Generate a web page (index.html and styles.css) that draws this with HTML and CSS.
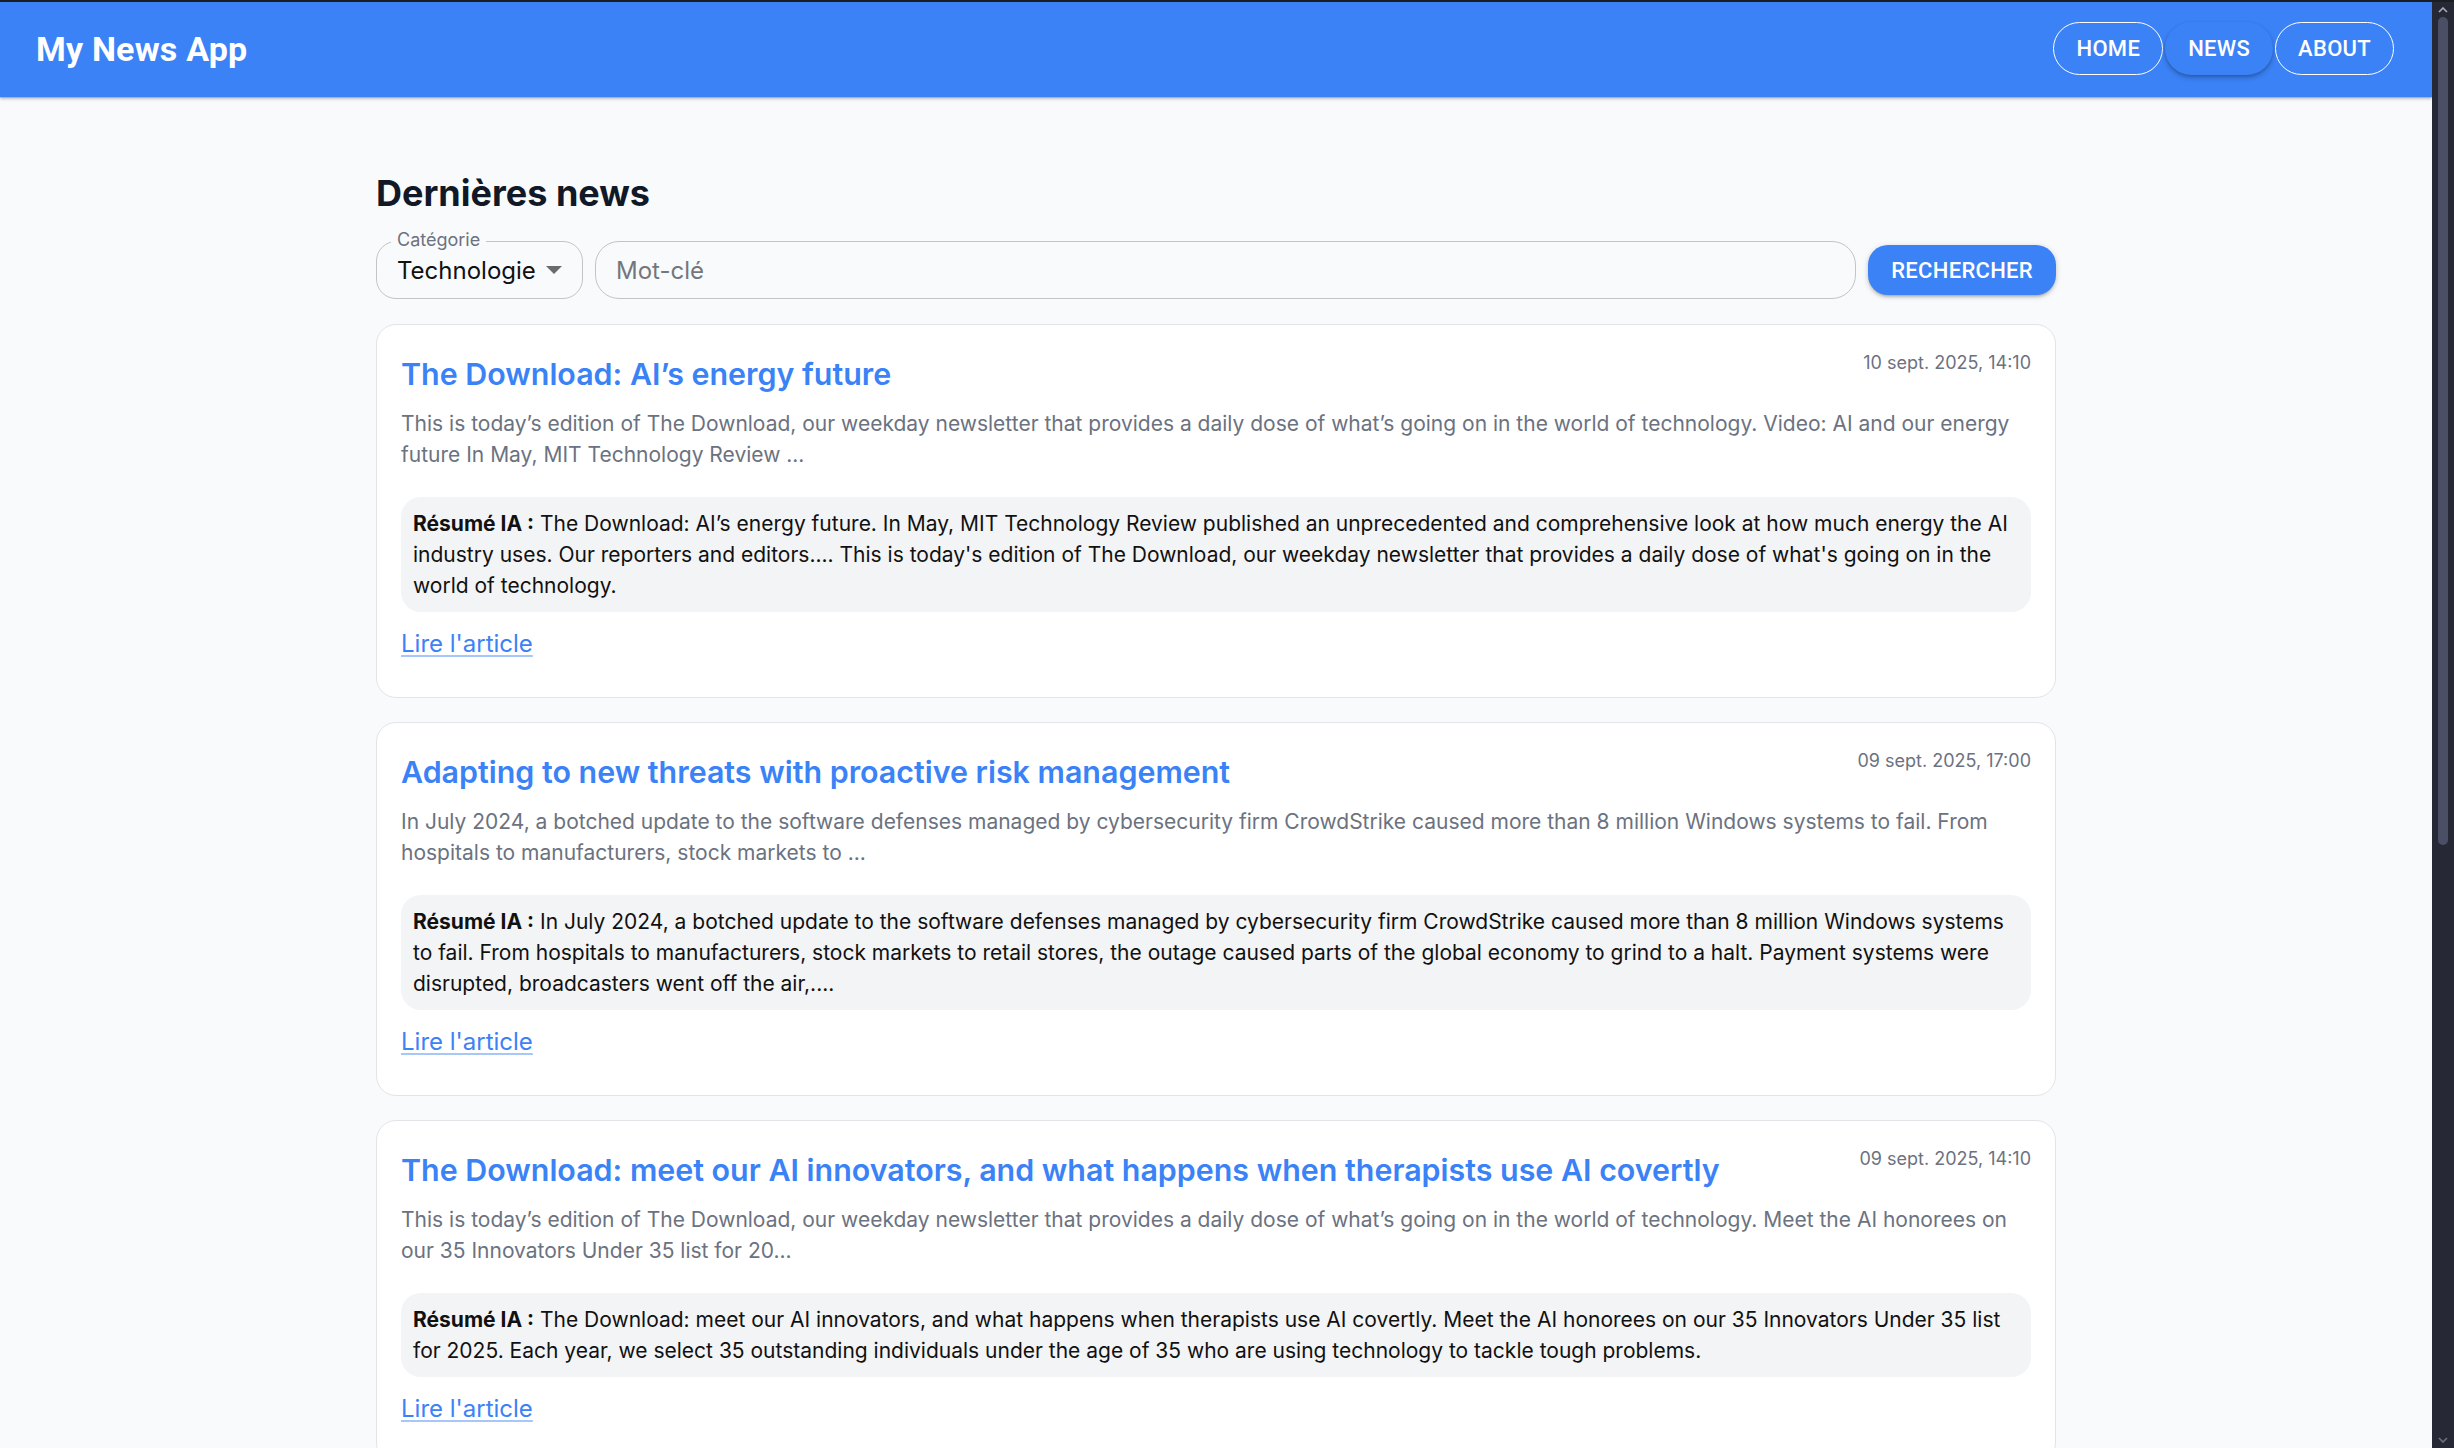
FILE: index.html
```html
<!DOCTYPE html>
<html lang="fr">
<head>
<meta charset="utf-8">
<title>My News App</title>
<link rel="stylesheet" href="styles.css">
</head>
<body>
<div class="window">
  <div class="viewport">
    <header class="appbar">
      <div class="brand">My News App</div>
      <nav class="nav">
        <a class="nav-btn outlined">HOME</a>
        <a class="nav-btn raised">NEWS</a>
        <a class="nav-btn outlined">ABOUT</a>
      </nav>
    </header>
    <main class="container">
      <h1 class="page-title">Dernières news</h1>
      <div class="search-row">
        <div class="select">
          <span class="select-label">Catégorie</span>
          <span class="select-value">Technologie</span>
          <svg class="select-arrow" width="16" height="8" viewBox="0 0 16 8"><path d="M0 0 L16 0 L8 8 Z" fill="#6b6b6b"/></svg>
        </div>
        <div class="keyword">
          <span class="placeholder">Mot-clé</span>
        </div>
        <button class="search-btn">RECHERCHER</button>
      </div>

      <article class="card">
        <div class="card-head">
          <h2 class="card-title">The Download: AI’s energy future</h2>
          <span class="card-date">10 sept. 2025, 14:10</span>
        </div>
        <p class="card-desc">This is today’s edition of The Download, our weekday newsletter that provides a daily dose of what’s going on in the world of technology. Video: AI and our energy future In May, MIT Technology Review ...</p>
        <div class="summary"><strong>Résumé IA :</strong> The Download: AI’s energy future. In May, MIT Technology Review published an unprecedented and comprehensive look at how much energy the AI industry uses. Our reporters and editors.... This is today's edition of The Download, our weekday newsletter that provides a daily dose of what's going on in the world of technology.</div>
        <div class="card-foot"><a class="read-link">Lire l'article</a></div>
      </article>

      <article class="card">
        <div class="card-head">
          <h2 class="card-title">Adapting to new threats with proactive risk management</h2>
          <span class="card-date">09 sept. 2025, 17:00</span>
        </div>
        <p class="card-desc">In July 2024, a botched update to the software defenses managed by cybersecurity firm CrowdStrike caused more than 8 million Windows systems to fail. From hospitals to manufacturers, stock markets to ...</p>
        <div class="summary"><strong>Résumé IA :</strong> In July 2024, a botched update to the software defenses managed by cybersecurity firm CrowdStrike caused more than 8 million Windows systems to fail. From hospitals to manufacturers, stock markets to retail stores, the outage caused parts of the global economy to grind to a halt. Payment systems were disrupted, broadcasters went off the air,....</div>
        <div class="card-foot"><a class="read-link">Lire l'article</a></div>
      </article>

      <article class="card">
        <div class="card-head">
          <h2 class="card-title">The Download: meet our AI innovators, and what happens when therapists use AI covertly</h2>
          <span class="card-date">09 sept. 2025, 14:10</span>
        </div>
        <p class="card-desc">This is today’s edition of The Download, our weekday newsletter that provides a daily dose of what’s going on in the world of technology. Meet the AI honorees on our 35 Innovators Under 35 list for 20...</p>
        <div class="summary"><strong>Résumé IA :</strong> The Download: meet our AI innovators, and what happens when therapists use AI covertly. Meet the AI honorees on our 35 Innovators Under 35 list for 2025. Each year, we select 35 outstanding individuals under the age of 35 who are using technology to tackle tough problems.</div>
        <div class="card-foot"><a class="read-link">Lire l'article</a></div>
      </article>
    </main>
  </div>
  <div class="scrollbar">
    <svg class="sb-arrow" width="10" height="6" viewBox="0 0 10 6"><path d="M1 5 L5 1 L9 5" fill="none" stroke="#a9abb6" stroke-width="1.6"/></svg>
    <div class="sb-track"><div class="sb-thumb"></div></div>
    <svg class="sb-arrow" width="10" height="6" viewBox="0 0 10 6"><path d="M1 1 L5 5 L9 1" fill="none" stroke="#6d7080" stroke-width="1.6"/></svg>
  </div>
</div>
</body>
</html>
```

FILE: styles.css
```css
html, body {
  margin: 0;
  padding: 0;
  height: 100%;
  overflow: hidden;
}

body {
  background: #f9fafb;
  font-family: Inter, "Noto Sans", sans-serif;
  color: #111827;
}

.window {
  display: flex;
  height: 100vh;
  box-sizing: border-box;
  border-top: 2px solid #1c1d22;
}

.viewport {
  flex: 1;
  overflow: hidden;
  background: #f9fafb;
}

/* ---------- App bar ---------- */
.appbar {
  position: relative;
  z-index: 1;
  height: 95px;
  box-sizing: border-box;
  padding: 0 38px 0 36px;
  display: flex;
  align-items: center;
  justify-content: space-between;
  background: #3b82f6;
  box-shadow: 0 2px 3px rgba(0, 0, 0, 0.22), 0 1px 1px rgba(0, 0, 0, 0.12);
}

.brand {
  font-family: Roboto, "Liberation Sans", sans-serif;
  font-weight: 700;
  font-size: 34px;
  color: #ffffff;
  letter-spacing: 0.2px;
  margin-top: -2px;
}

.nav {
  display: flex;
  gap: 2px;
  margin-top: -2px;
}

.nav-btn {
  display: inline-flex;
  align-items: center;
  height: 53px;
  box-sizing: border-box;
  padding: 0 22px;
  border-radius: 27px;
  font-family: Roboto, "Liberation Sans", sans-serif;
  font-weight: 500;
  font-size: 22px;
  letter-spacing: 0.3px;
  color: #ffffff;
}

.nav-btn.outlined {
  border: 1.5px solid #ffffff;
}

.nav-btn.raised {
  border: 1.5px solid transparent;
  box-shadow: 0 3px 5px rgba(0, 0, 0, 0.22), 0 1px 3px rgba(0, 0, 0, 0.14);
}

/* ---------- Main ---------- */
.container {
  width: 1680px;
  margin: 0 auto;
  padding-top: 73px;
}

.page-title {
  margin: 0;
  font-size: 36px;
  line-height: 46px;
  font-weight: 700;
  color: #111827;
}

.search-row {
  display: flex;
  align-items: center;
  gap: 12px;
  margin-top: 25px;
  margin-bottom: 25px;
}

.select {
  position: relative;
  width: 207px;
  height: 58px;
  box-sizing: border-box;
  border: 1.5px solid #c3c4c6;
  border-radius: 20px;
  display: flex;
  align-items: center;
  padding: 0 20px 0 20px;
  justify-content: space-between;
}

.select-label {
  position: absolute;
  left: 14px;
  top: -13px;
  padding: 0 6px;
  background: #f9fafb;
  font-size: 18px;
  line-height: 22px;
  color: #6b7280;
}

.select-value {
  font-size: 24px;
  color: #111111;
}

.select-arrow {
  flex: none;
}

.keyword {
  flex: 1;
  height: 58px;
  box-sizing: border-box;
  border: 1.5px solid #c3c4c6;
  border-radius: 24px;
  display: flex;
  align-items: center;
  padding: 0 20px;
}

.placeholder {
  font-size: 24px;
  color: #72777f;
}

.search-btn {
  height: 50px;
  padding: 0 23px;
  border: none;
  border-radius: 20px;
  background: #3b82f6;
  color: #ffffff;
  font-family: Roboto, "Liberation Sans", sans-serif;
  font-weight: 500;
  font-size: 22px;
  letter-spacing: 0.3px;
  box-shadow: 0 3px 3px -2px rgba(0, 0, 0, 0.2), 0 2px 4px rgba(0, 0, 0, 0.14), 0 1px 7px rgba(0, 0, 0, 0.1);
}

/* ---------- Cards ---------- */
.card {
  background: #ffffff;
  border: 1.5px solid #e2e4e8;
  border-radius: 20px;
  padding: 26px 24px 24px 24px;
  margin-bottom: 24px;
}

.card-head {
  display: flex;
  justify-content: space-between;
  align-items: flex-start;
  gap: 24px;
}

.card-title {
  margin: 4px 0 0 0;
  font-size: 30.4px;
  line-height: 38px;
  font-weight: 600;
  color: #3b82f6;
}

.card-date {
  flex: none;
  font-size: 18px;
  line-height: 24px;
  color: #6b7280;
}

.card-desc {
  margin: 15px 0 0 0;
  font-size: 21px;
  line-height: 31px;
  color: #6b7280;
}

.summary {
  margin-top: 27px;
  padding: 11px 12px;
  background: #f3f4f6;
  border-radius: 20px;
  font-size: 21px;
  line-height: 31px;
  color: #111111;
}

.summary strong {
  font-weight: 700;
}

.card-foot {
  margin-top: 17px;
  padding-bottom: 14px;
}

.read-link {
  font-size: 24px;
  line-height: 30px;
  color: #3b82f6;
  text-decoration: underline;
  text-decoration-color: rgba(59, 130, 246, 0.45);
  text-underline-offset: 3px;
}

/* ---------- Scrollbar ---------- */
.scrollbar {
  width: 22px;
  flex: none;
  background: #262935;
  display: flex;
  flex-direction: column;
  align-items: center;
  padding: 5px 0 5px 0;
  box-sizing: border-box;
}

.sb-arrow {
  flex: none;
}

.sb-track {
  flex: 1;
  width: 100%;
  display: flex;
  justify-content: center;
  padding-top: 4px;
}

.sb-thumb {
  width: 10px;
  height: 828px;
  border-radius: 5px;
  background: #4b4f66;
}
```
